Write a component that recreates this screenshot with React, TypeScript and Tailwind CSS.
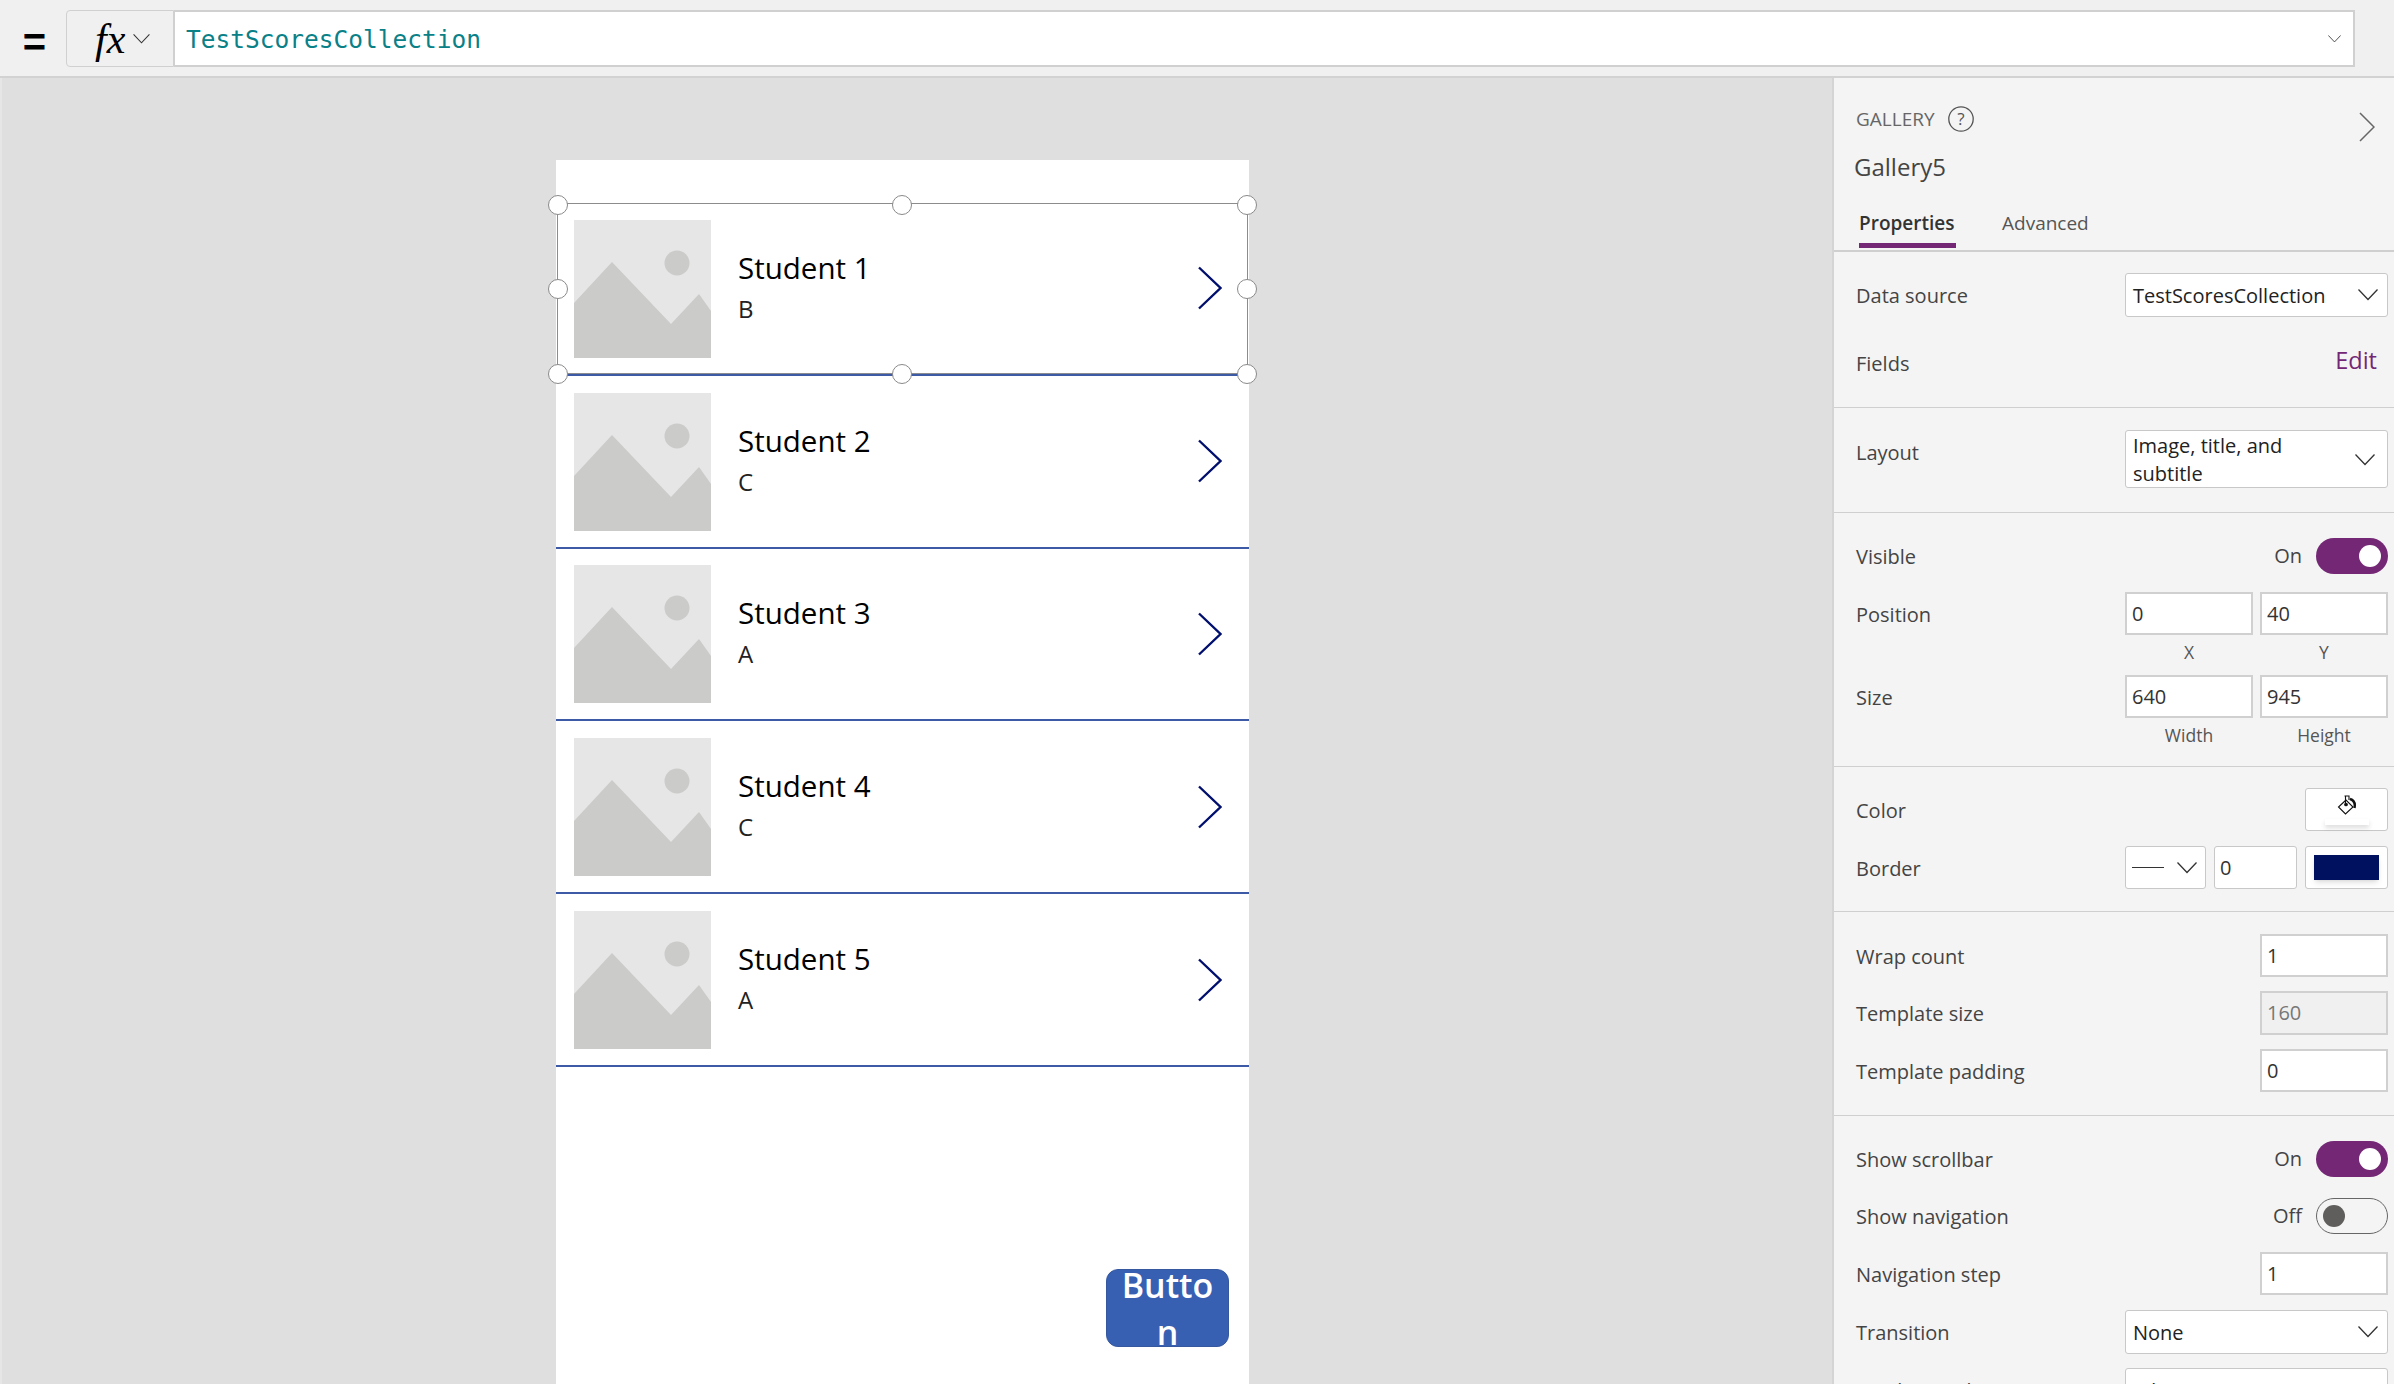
const students = [
  { name: "Student 1", grade: "B" },
  { name: "Student 2", grade: "C" },
  { name: "Student 3", grade: "A" },
  { name: "Student 4", grade: "C" },
  { name: "Student 5", grade: "A" },
];

const Chevron = ({ className = "" }: { className?: string }) => (
  <svg viewBox="0 0 20 12" fill="none" stroke="currentColor" strokeWidth="1.3" className={className}>
    <path d="M0.5 0.5 L10 10.5 L19.5 0.5" />
  </svg>
);

const Placeholder = () => (
  <svg viewBox="0 0 137 138" className="block w-[137px] h-[138px] shrink-0 mt-[1px]">
    <rect width="137" height="138" fill="#e6e6e6" />
    <path d="M0 83 L38 42 L97 104 L125 74 L137 91 L137 138 L0 138 Z" fill="#cbcbca" />
    <ellipse cx="103" cy="43" rx="12.5" ry="12.5" fill="#cbcbca" />
  </svg>
);

const Row = ({ s }: { s: { name: string; grade: string } }) => (
  <div className="h-[172.8px] border-b-2 border-[#3d5aa6] flex items-center pl-[18px] pr-[27px] box-border">
    <Placeholder />
    <div className="ml-[27px] flex-1 text-black">
      <div className="text-[29.5px] leading-[40px] font-medium">{s.name}</div>
      <div className="text-[24px] leading-[40px] mt-[1px] text-[#222]">{s.grade}</div>
    </div>
    <svg viewBox="0 0 24 44" fill="none" stroke="#000f6e" strokeWidth="2.4" className="w-[24px] h-[44px]">
      <path d="M1 1.5 L22.5 22 L1 42.5" />
    </svg>
  </div>
);

const Handle = ({ className }: { className: string }) => (
  <div className={`absolute w-[20px] h-[20px] rounded-full bg-white border border-[#8a8a8a] ${className}`} />
);

const Box = ({ value, className = "", muted = false }: { value: string; className?: string; muted?: boolean }) => (
  <div
    className={`h-[43px] border-2 border-[#d0d0d0] px-[5px] flex items-center text-[20px] box-border ${muted ? "bg-[#f0f0f0] text-[#777]" : "bg-white text-[#333]"} ${className}`}
  >
    {value}
  </div>
);

const Select = ({ value, className = "" }: { value: string; className?: string }) => (
  <div className={`w-[263px] h-[44px] bg-white border border-[#c8c8c8] rounded-[3px] pl-[7px] pr-[9px] flex items-center justify-between text-[20px] text-[#222] box-border ${className}`}>
    <span className="pt-[2px]">{value}</span>
    <Chevron className="w-[20px] h-[12px] text-[#333]" />
  </div>
);

const Toggle = ({ on }: { on: boolean }) => (
  <div className="flex items-center gap-[14px]">
    <span className="text-[20px] text-[#444]">{on ? "On" : "Off"}</span>
    {on ? (
      <div className="w-[72px] h-[36px] rounded-full bg-[#742774] flex items-center justify-end pr-[7px]">
        <div className="w-[22px] h-[22px] rounded-full bg-white" />
      </div>
    ) : (
      <div className="w-[72px] h-[36px] rounded-full border border-[#666] flex items-center pl-[6px] box-border">
        <div className="w-[22px] h-[22px] rounded-full bg-[#605e5c]" />
      </div>
    )}
  </div>
);

const PaintIcon = () => (
  <svg viewBox="0 0 20 20" fill="none" stroke="#111" strokeWidth="1.1" className="w-[20px] h-[20px]">
    <path d="M9 5 L1.5 12 L8.5 19 L16 12 Z" />
    <path d="M7.5 1 H12 V5 M8.5 1 V8" />
    <circle cx="9" cy="9.5" r="1.3" fill="#111" />
    <path d="M13 4 C16.5 5 18.5 8 17.5 13" strokeWidth="2.4" />
  </svg>
);

const Section = ({ className, children }: { className: string; children: React.ReactNode }) => (
  <div className={`border-b border-[#cfcfcf] box-border ${className}`}>{children}</div>
);

const Line = ({ label, className = "", children }: { label: string; className?: string; children?: React.ReactNode }) => (
  <div className={`flex items-start justify-between pl-[22px] pr-[6px] ${className}`}>
    <div className="text-[20px] text-[#444] pt-[9px] leading-[28px]">{label}</div>
    {children}
  </div>
);

const ToggleLine = ({ label, on, className = "" }: { label: string; on: boolean; className?: string }) => (
  <div className={`flex items-center justify-between h-[36px] pl-[22px] pr-[6px] ${className}`}>
    <div className="text-[20px] text-[#444] leading-[28px] pt-[2px]">{label}</div>
    <Toggle on={on} />
  </div>
);

const Pair = ({ a, b, capA, capB }: { a: string; b: string; capA: string; capB: string }) => (
  <div className="grid grid-cols-[128px_128px] gap-x-[7px] text-center text-[17.5px] text-[#555]">
    <Box value={a} />
    <Box value={b} />
    <div className="h-[40px] leading-[34px]">{capA}</div>
    <div className="h-[40px] leading-[34px]">{capB}</div>
  </div>
);

export default function App() {
  return (
    <div className="w-[2394px] h-[1384px] overflow-hidden flex flex-col bg-[#dfdfdf] font-['Open_Sans',sans-serif]">
      <div className="h-[78px] shrink-0 bg-[#f0f0f0] border-b-2 border-[#d2d2d2] box-border flex items-start pt-[10px] pr-[39px]">
        <div className="w-[66px] h-[57px] flex items-center justify-center pl-[3px] pt-[6px] text-[40px] font-bold text-black font-['Liberation_Sans',sans-serif]">
          =
        </div>
        <div className="w-[108px] h-[57px] border border-[#d0d0d0] rounded-l-[4px] bg-[#f0f0f0] flex items-center pl-[28px] gap-[8px] box-border">
          <span className="text-[42px] leading-none italic text-black font-['Liberation_Serif',serif]">fx</span>
          <Chevron className="w-[17px] h-[10px] text-[#333]" />
        </div>
        <div className="flex-1 h-[57px] bg-white border-2 border-l-1 border-[#d0d0d0] box-border flex items-center justify-between pl-[11px] pr-[12px]">
          <span className="text-[24.5px] text-[#0a8087] pt-[3px] font-['DejaVu_Sans_Mono',monospace]">TestScoresCollection</span>
          <Chevron className="w-[13px] h-[8px] text-[#333]" />
        </div>
      </div>

      <div className="flex-1 min-h-0 flex">
        <div className="flex-1 min-w-0 pl-[554px] pt-[82px] border-l-2 border-[#e6e6e6]">
          <div className="relative w-[693px] h-[1240px] bg-white pt-[43px]">
            {students.map((s) => (
              <Row key={s.name} s={s} />
            ))}
            <div className="absolute left-[1px] top-[43px] w-[691px] h-[171px] border border-[#8c8c8c]" />
            <Handle className="left-[-8px] top-[35px]" />
            <Handle className="left-[336px] top-[35px]" />
            <Handle className="right-[-8px] top-[35px]" />
            <Handle className="left-[-8px] top-[119px]" />
            <Handle className="right-[-8px] top-[119px]" />
            <Handle className="left-[-8px] top-[204px]" />
            <Handle className="left-[336px] top-[204px]" />
            <Handle className="right-[-8px] top-[204px]" />
            <div className="absolute left-[550px] top-[1109px] w-[123px] h-[78px] rounded-[12px] bg-[#3860b2] border border-[#35589f] overflow-hidden text-center text-white font-semibold text-[34px] leading-[47px] box-border">
              <div className="-mt-[8px]">Butto</div>
              <div>n</div>
            </div>
          </div>
        </div>

        <div className="w-[562px] shrink-0 bg-[#f4f4f4] border-l-2 border-[#d4d4d4] box-border overflow-hidden">
          <div className="h-[174px] border-b-2 border-[#cfcfcf] box-border relative">
            <div className="flex items-start justify-between pt-[27px] pl-[22px] pr-[19px]">
              <div>
                <div className="flex items-center gap-[13px] h-[27px]">
                  <span className="text-[19px] text-[#666] pt-[2px]">GALLERY</span>
                  <svg viewBox="0 0 26 26" fill="none" className="w-[26px] h-[26px]">
                    <circle cx="13" cy="13" r="12.2" stroke="#555" strokeWidth="1.3" />
                    <text x="13" y="19" textAnchor="middle" fontSize="17" fill="#555" fontFamily="Open Sans, sans-serif">?</text>
                  </svg>
                </div>
                <div className="text-[24px] leading-[32px] mt-[19px] -ml-[2px] text-[#444]">Gallery5</div>
              </div>
              <svg viewBox="0 0 16 30" fill="none" stroke="#666" strokeWidth="1.5" className="w-[16px] h-[30px] mt-[7px]">
                <path d="M1 1 L15 15 L1 29" />
              </svg>
            </div>
            <div className="absolute left-[25px] bottom-0 flex gap-[46px] h-[46px] items-start text-[19px] leading-[38px]">
              <div className="font-semibold text-[#333] border-b-[5px] border-[#742774] h-[44px] box-border w-[97px]">Properties</div>
              <div className="text-[#555]">Advanced</div>
            </div>
          </div>

          <Section className="h-[156px] pt-[21px]">
            <Line label="Data source">
              <Select value="TestScoresCollection" />
            </Line>
            <div className="flex justify-between items-start pl-[22px] pr-[17px] mt-[26px]">
              <div className="text-[20px] text-[#444] pt-[7px] leading-[28px]">Fields</div>
              <span className="text-[23.5px] text-[#742774] leading-[34px]">Edit</span>
            </div>
          </Section>

          <Section className="h-[105px] pt-[22px]">
            <Line label="Layout">
              <div className="w-[263px] h-[58px] bg-white border border-[#c8c8c8] rounded-[3px] pl-[7px] pr-[12px] pt-[2px] flex items-center justify-between text-[20px] leading-[28px] text-[#222] box-border">
                <span className="w-[190px]">Image, title, and subtitle</span>
                <Chevron className="w-[20px] h-[12px] text-[#333]" />
              </div>
            </Line>
          </Section>

          <Section className="h-[254px] pt-[25px]">
            <ToggleLine label="Visible" on />
            <Line label="Position" className="mt-[18px]">
              <Pair a="0" b="40" capA="X" capB="Y" />
            </Line>
            <Line label="Size">
              <Pair a="640" b="945" capA="Width" capB="Height" />
            </Line>
          </Section>

          <Section className="h-[145px] pt-[21px]">
            <Line label="Color">
              <div className="w-[83px] h-[43px] bg-white border border-[#c8c8c8] rounded-[3px] flex flex-col items-center pt-[6px] box-border">
                <PaintIcon />
                <div className="w-[44px] h-[6px] mt-[4px] bg-white shadow-[0_3px_5px_rgba(0,0,0,0.14)]" />
              </div>
            </Line>
            <Line label="Border" className="mt-[15px]">
              <div className="flex gap-[8px]">
                <div className="w-[81px] h-[43px] bg-white border border-[#c8c8c8] rounded-[3px] flex items-center justify-between pl-[6px] pr-[8px] box-border">
                  <div className="w-[32px] h-[1px] bg-[#333]" />
                  <Chevron className="w-[20px] h-[12px] text-[#333]" />
                </div>
                <Box value="0" className="w-[83px] !border !rounded-[3px] !border-[#c8c8c8]" />
                <div className="w-[83px] h-[43px] bg-white border border-[#c8c8c8] rounded-[3px] flex items-center justify-center box-border">
                  <div className="w-[65px] h-[25px] bg-[#00115f] shadow-md" />
                </div>
              </div>
            </Line>
          </Section>

          <Section className="h-[204px] pt-[22px]">
            <Line label="Wrap count">
              <Box value="1" className="w-[128px]" />
            </Line>
            <Line label="Template size" className="mt-[14px]">
              <Box value="160" muted className="w-[128px] h-[44px]" />
            </Line>
            <Line label="Template padding" className="mt-[14px]">
              <Box value="0" className="w-[128px]" />
            </Line>
          </Section>

          <div className="pt-[25px]">
            <ToggleLine label="Show scrollbar" on />
            <ToggleLine label="Show navigation" on={false} className="mt-[21px]" />
            <Line label="Navigation step" className="mt-[18px]">
              <Box value="1" className="w-[128px]" />
            </Line>
            <Line label="Transition" className="mt-[15px]">
              <Select value="None" className="h-[43px]" />
            </Line>
            <Line label="Display mode" className="mt-[14px]">
              <Select value="Edit" />
            </Line>
          </div>
        </div>
      </div>
    </div>
  );
}
